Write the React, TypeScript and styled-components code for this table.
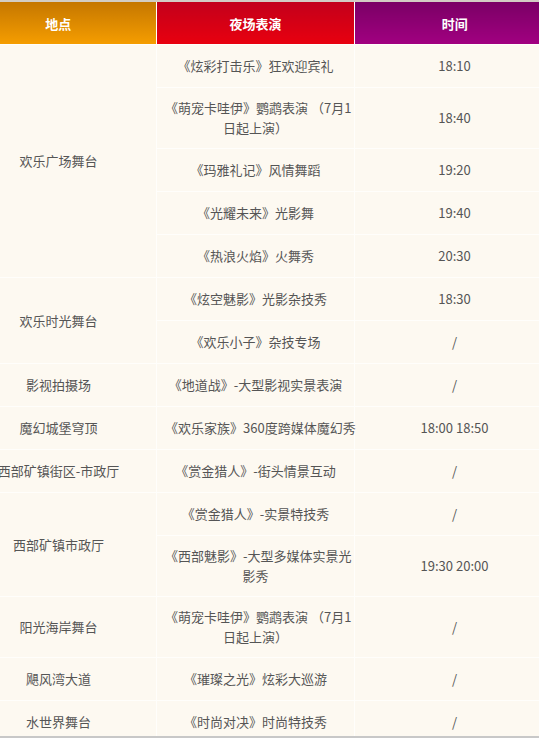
import React from "react";
import styled, { createGlobalStyle } from "styled-components";

const GlobalStyle = createGlobalStyle`
  html, body {
    margin: 0;
    padding: 0;
    background: #fdf9f1;
  }
  body {
    font-family: "Noto Sans CJK SC", "Noto Sans", sans-serif;
  }
`;

const Frame = styled.div`
  width: 539px;
  height: 734px;
  overflow: hidden;
  border-top: 2px solid #d3cdc4;
  border-bottom: 2px solid #c8c8c8;
  background: #fdf9f1;
`;

const Table = styled.table`
  width: 594px;
  margin-left: -40px;
  border-collapse: collapse;
  table-layout: fixed;
  font-size: 13px;
  color: #555;
`;

const gradients: Record<string, string> = {
  place: "linear-gradient(#c57700, #f59d00)",
  show: "linear-gradient(#c2001b, #e8000f)",
  time: "linear-gradient(#7a0065, #a10080)",
};

const HeadCell = styled.th<{ $kind: string }>`
  height: 42px;
  padding: 0;
  background: ${(p) => gradients[p.$kind]};
  color: #fff;
  font-weight: bold;
  font-size: 13px;
  text-align: center;
  border-right: 1px solid #fff;
  &:last-child {
    border-right: none;
  }
`;

const Cell = styled.td`
  height: 22px;
  padding: 10px 8px;
  line-height: 20px;
  text-align: center;
  vertical-align: middle;
  white-space: nowrap;
  border: 1px solid #fffefb;
`;

const Line = styled.div`
  line-height: 20px;
`;

type Row = {
  place?: string;
  span?: number;
  show: string[];
  time: string;
};

const rows: Row[] = [
  { place: "欢乐广场舞台", span: 5, show: ["《炫彩打击乐》狂欢迎宾礼"], time: "18:10" },
  { show: ["《萌宠卡哇伊》鹦鹉表演 （7月1", "日起上演）"], time: "18:40" },
  { show: ["《玛雅礼记》风情舞蹈"], time: "19:20" },
  { show: ["《光耀未来》光影舞"], time: "19:40" },
  { show: ["《热浪火焰》火舞秀"], time: "20:30" },
  { place: "欢乐时光舞台", span: 2, show: ["《炫空魅影》光影杂技秀"], time: "18:30" },
  { show: ["《欢乐小子》杂技专场"], time: "/" },
  { place: "影视拍摄场", show: ["《地道战》-大型影视实景表演"], time: "/" },
  { place: "魔幻城堡穹顶", show: ["《欢乐家族》360度跨媒体魔幻秀"], time: "18:00 18:50" },
  { place: "西部矿镇街区-市政厅", show: ["《赏金猎人》-街头情景互动"], time: "/" },
  { place: "西部矿镇市政厅", span: 2, show: ["《赏金猎人》-实景特技秀"], time: "/" },
  { show: ["《西部魅影》-大型多媒体实景光", "影秀"], time: "19:30 20:00" },
  { place: "阳光海岸舞台", show: ["《萌宠卡哇伊》鹦鹉表演 （7月1", "日起上演）"], time: "/" },
  { place: "飓风湾大道", show: ["《璀璨之光》炫彩大巡游"], time: "/" },
  { place: "水世界舞台", show: ["《时尚对决》时尚特技秀"], time: "/" },
];

export default function App() {
  return (
    <>
      <GlobalStyle />
      <Frame>
        <Table>
          <colgroup>
            <col style={{ width: 196 }} />
            <col style={{ width: 198 }} />
            <col style={{ width: 200 }} />
          </colgroup>
          <thead>
            <tr>
              <HeadCell $kind="place">地点</HeadCell>
              <HeadCell $kind="show">夜场表演</HeadCell>
              <HeadCell $kind="time">时间</HeadCell>
            </tr>
          </thead>
          <tbody>
            {rows.map((r, i) => (
              <tr key={i}>
                {r.place && <Cell rowSpan={r.span ?? 1}>{r.place}</Cell>}
                <Cell>
                  {r.show.map((l, j) => (
                    <Line key={j}>{l}</Line>
                  ))}
                </Cell>
                <Cell>{r.time}</Cell>
              </tr>
            ))}
          </tbody>
        </Table>
      </Frame>
    </>
  );
}
